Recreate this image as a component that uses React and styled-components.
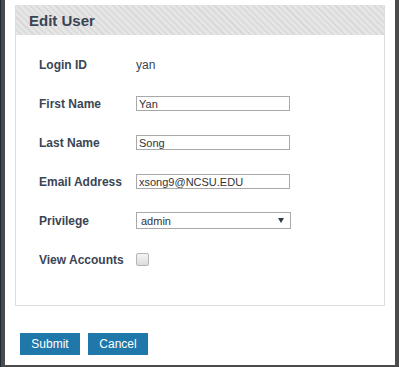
import React from "react";
import styled, { createGlobalStyle } from "styled-components";

const GlobalStyle = createGlobalStyle`
  html, body {
    margin: 0;
    padding: 0;
    background: #4b4b4b;
  }
  body {
    font-family: "Liberation Sans", Arial, sans-serif;
  }
`;

const Backdrop = styled.div`
  width: 399px;
  height: 367px;
  box-sizing: border-box;
  padding: 0 4px 2px 4px;
  background: #4b4b4b;
  border-left: 1px solid #1c2a33;
`;

const Dialog = styled.div`
  height: 365px;
  background: #ffffff;
  padding: 5px 10px 0 10px;
  box-sizing: border-box;
`;

const Panel = styled.div`
  border: 1px solid #dedede;
  border-top: none;
`;

const PanelHeader = styled.div`
  height: 30px;
  display: flex;
  align-items: center;
  padding-left: 13px;
  background-color: #e5e5e5;
  background-image: repeating-linear-gradient(
    45deg,
    #e5e5e5 0px,
    #e5e5e5 3px,
    #d9d9d9 3px,
    #d9d9d9 4.5px
  );
  font-size: 15px;
  font-weight: bold;
  color: #3a4554;
`;

const PanelBody = styled.div`
  padding: 10px 0 26px 23px;
`;

const Row = styled.div`
  display: flex;
  align-items: center;
  height: 39px;
`;

const Label = styled.div`
  width: 97px;
  font-size: 12px;
  font-weight: bold;
  color: #3a4554;
`;

const Value = styled.div`
  font-size: 12px;
  color: #3a4554;
`;

const TextInput = styled.input`
  width: 154px;
  height: 15px;
  box-sizing: border-box;
  border: 1px solid #a9a9a9;
  padding: 0 2px;
  margin: 0;
  font-family: "Liberation Sans", Arial, sans-serif;
  font-size: 11px;
  color: #333;
  outline: none;
`;

const SelectBox = styled.div`
  width: 155px;
  height: 17px;
  box-sizing: border-box;
  border: 1px solid #a9a9a9;
  display: flex;
  align-items: center;
  justify-content: space-between;
  padding: 0 6px 0 4px;
  font-size: 11px;
  color: #333;
`;

const Arrow = styled.span`
  width: 0;
  height: 0;
  border-left: 3px solid transparent;
  border-right: 3px solid transparent;
  border-top: 5px solid #2f3a45;
`;

const Check = styled.span`
  width: 11px;
  height: 11px;
  border: 1px solid #b5b5b5;
  border-radius: 2px;
  background: linear-gradient(#f4f4f4, #dcdcdc);
`;

const Actions = styled.div`
  display: flex;
  gap: 8px;
  margin-top: 27px;
  padding-left: 5px;
`;

const Button = styled.button`
  width: 60px;
  height: 22px;
  border: none;
  background: #1f77aa;
  color: #ffffff;
  font-family: "Liberation Sans", Arial, sans-serif;
  font-size: 12px;
  font-weight: normal;
  padding: 0;
  cursor: pointer;
`;

const fields = [
  { label: "First Name", value: "Yan" },
  { label: "Last Name", value: "Song" },
  { label: "Email Address", value: "xsong9@NCSU.EDU" },
];

export default function App() {
  return (
    <>
      <GlobalStyle />
      <Backdrop>
        <Dialog>
          <Panel>
            <PanelHeader>Edit User</PanelHeader>
            <PanelBody>
              <Row>
                <Label>Login ID</Label>
                <Value>yan</Value>
              </Row>
              {fields.map((f) => (
                <Row key={f.label}>
                  <Label>{f.label}</Label>
                  <TextInput defaultValue={f.value} />
                </Row>
              ))}
              <Row>
                <Label>Privilege</Label>
                <SelectBox>
                  admin
                  <Arrow />
                </SelectBox>
              </Row>
              <Row>
                <Label>View Accounts</Label>
                <Check />
              </Row>
            </PanelBody>
          </Panel>
          <Actions>
            <Button>Submit</Button>
            <Button>Cancel</Button>
          </Actions>
        </Dialog>
      </Backdrop>
    </>
  );
}
